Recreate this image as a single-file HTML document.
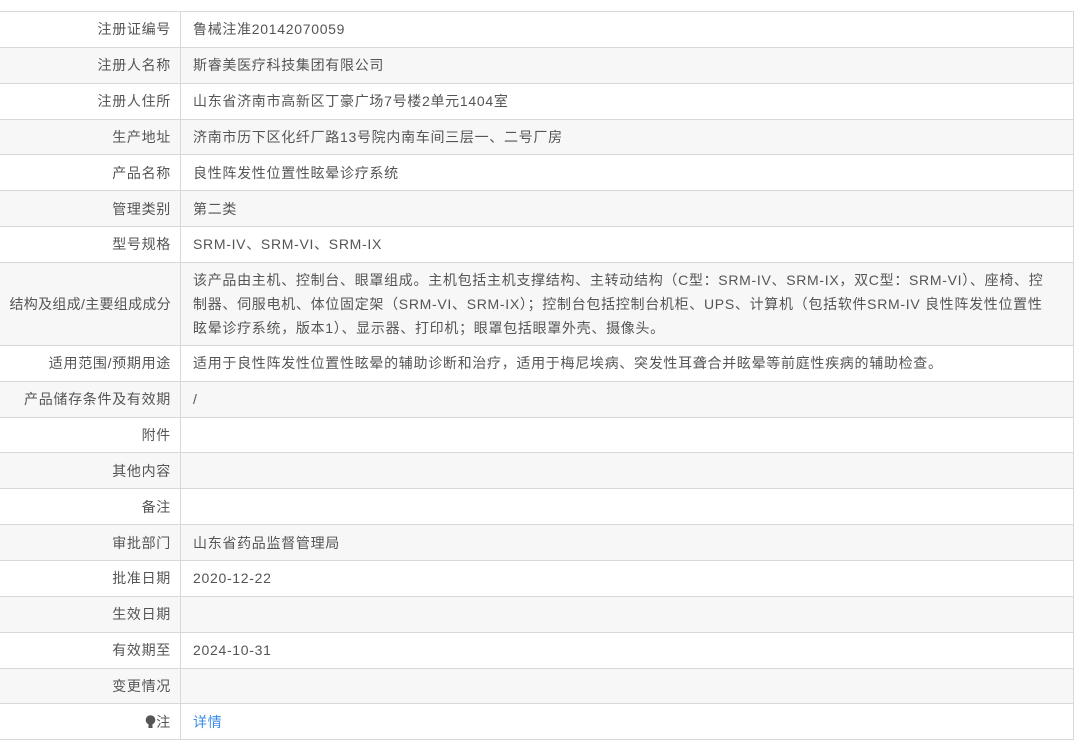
<!DOCTYPE html>
<html><head><meta charset="utf-8"><style>
html,body{margin:0;padding:0;background:#fff;width:1078px;height:754px;overflow:hidden}
table{position:absolute;left:0;top:11px;width:1074px;border-collapse:collapse;font-family:"Liberation Sans","Noto Sans CJK SC",sans-serif;font-size:14px;color:#555;letter-spacing:0.7px}
td{border-top:1px solid #d8d8d8;border-bottom:1px solid #d8d8d8;height:34.85px;padding:0;vertical-align:middle}
td.l{width:171px;text-align:right;padding-right:9px;border-right:1px solid #d8d8d8}
td.v{padding-left:12px;padding-right:8px;border-right:1px solid #d8d8d8;line-height:24px}
tr:nth-child(even) td{background:#f7f7f7}
a{color:#3b8ee8;text-decoration:none}
</style></head><body>
<table>
<tr><td class="l">注册证编号</td><td class="v">鲁械注准20142070059</td></tr>
<tr><td class="l">注册人名称</td><td class="v">斯睿美医疗科技集团有限公司</td></tr>
<tr><td class="l">注册人住所</td><td class="v">山东省济南市高新区丁豪广场7号楼2单元1404室</td></tr>
<tr><td class="l">生产地址</td><td class="v">济南市历下区化纤厂路13号院内南车间三层一、二号厂房</td></tr>
<tr><td class="l">产品名称</td><td class="v">良性阵发性位置性眩晕诊疗系统</td></tr>
<tr><td class="l">管理类别</td><td class="v">第二类</td></tr>
<tr><td class="l">型号规格</td><td class="v">SRM-IV、SRM-VI、SRM-IX</td></tr>
<tr><td class="l" style="height:82px;letter-spacing:0.3px">结构及组成/主要组成成分</td><td class="v" style="padding-right:22px">该产品由主机、控制台、眼罩组成。主机包括主机支撑结构、主转动结构（C型：SRM-IV、SRM-IX，双C型：SRM-VI）、座椅、控制器、伺服电机、体位固定架（SRM-VI、SRM-IX）；控制台包括控制台机柜、UPS、计算机（包括软件SRM-IV 良性阵发性位置性眩晕诊疗系统，版本1）、显示器、打印机；眼罩包括眼罩外壳、摄像头。</td></tr>
<tr><td class="l">适用范围/预期用途</td><td class="v">适用于良性阵发性位置性眩晕的辅助诊断和治疗，适用于梅尼埃病、突发性耳聋合并眩晕等前庭性疾病的辅助检查。</td></tr>
<tr><td class="l">产品储存条件及有效期</td><td class="v">/</td></tr>
<tr><td class="l">附件</td><td class="v"></td></tr>
<tr><td class="l">其他内容</td><td class="v"></td></tr>
<tr><td class="l">备注</td><td class="v"></td></tr>
<tr><td class="l">审批部门</td><td class="v">山东省药品监督管理局</td></tr>
<tr><td class="l">批准日期</td><td class="v">2020-12-22</td></tr>
<tr><td class="l">生效日期</td><td class="v"></td></tr>
<tr><td class="l">有效期至</td><td class="v">2024-10-31</td></tr>
<tr><td class="l">变更情况</td><td class="v"></td></tr>
<tr><td class="l"><svg width="11" height="14" viewBox="0 0 11 14" style="vertical-align:-2px"><circle cx="5.5" cy="5" r="4.8" fill="#555"/><rect x="3.5" y="9" width="4" height="4" fill="#555"/></svg>注</td><td class="v"><a>详情</a></td></tr>
</table>
</body></html>
